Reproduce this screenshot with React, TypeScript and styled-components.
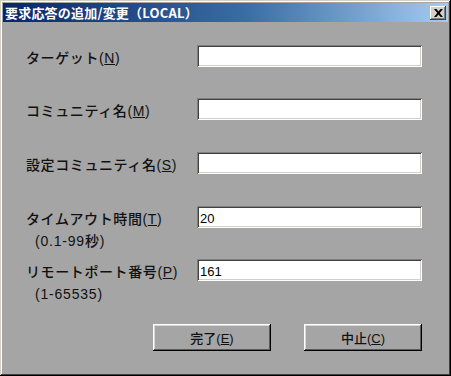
import * as React from 'react';
import { FunctionComponent } from 'react';
import styled, { createGlobalStyle } from 'styled-components';

const GlobalStyle = createGlobalStyle`
    html, body {
        margin: 0;
        padding: 0;
        background: #a5a5a5;
    }
`;

interface IField {
    label: string;
    mnemonic: string;
    hint?: string;
    value: string;
}

const fields: IField[] = [
    { label: 'ターゲット', mnemonic: 'N', value: '' },
    { label: 'コミュニティ名', mnemonic: 'M', value: '' },
    { label: '設定コミュニティ名', mnemonic: 'S', value: '' },
    { label: 'タイムアウト時間', mnemonic: 'T', hint: '(0.1-99秒)', value: '20' },
    { label: 'リモートポート番号', mnemonic: 'P', hint: '(1-65535)', value: '161' }
];

const Mnemonic: FunctionComponent<{ text: string; letter: string }> = props => (
    <>
        { props.text }(<u>{ props.letter }</u>)
    </>
);

const CloseGlyph = () => (
    <svg width="9" height="8" viewBox="0 0 9 8">
        <path d="M0 0h2.4l2.1 2.5L6.6 0H9L5.7 4 9 8H6.6L4.5 5.5 2.4 8H0l3.3-4z" fill="#000"/>
    </svg>
);

const App: FunctionComponent = () => (
    <>
        <GlobalStyle/>
        <Window>
            <TitleBar>
                <Title>要求応答の追加/変更（LOCAL）</Title>
                <CloseButton><CloseGlyph/></CloseButton>
            </TitleBar>
            <Body>
                <Form>
                    { fields.map(f => (
                        <Row key={ f.mnemonic }>
                            <LabelCol>
                                <Label><Mnemonic text={ f.label } letter={ f.mnemonic }/></Label>
                                { f.hint && <Hint>{ f.hint }</Hint> }
                            </LabelCol>
                            <TextField defaultValue={ f.value }/>
                        </Row>
                    )) }
                </Form>
                <Footer>
                    <Button><Mnemonic text="完了" letter="E"/></Button>
                    <Button><Mnemonic text="中止" letter="C"/></Button>
                </Footer>
            </Body>
        </Window>
    </>
);

const Window = styled.div`
    width: 451px;
    height: 376px;
    box-sizing: border-box;
    padding: 3px;
    display: flex;
    flex-direction: column;
    background: #a5a5a5;
    box-shadow: inset -1px -1px #000, inset 1px 1px #d4d0c8, inset -2px -2px #404040, inset 2px 2px #fff;
    font-family: "Liberation Sans", "Noto Sans CJK JP", sans-serif;
    color: #000;
`;

const TitleBar = styled.div`
    height: 19px;
    display: flex;
    align-items: center;
    justify-content: space-between;
    padding: 0 2px 0 2px;
    background: linear-gradient(to right, #0a246a 0%, #3a6ea5 55%, #a6caf0 100%);
`;

const Title = styled.span`
    color: #fff;
    font-family: "Noto Sans CJK JP", sans-serif;
    font-weight: bold;
    font-size: 13px;
    letter-spacing: 0.2px;
    line-height: 19px;
    white-space: nowrap;
`;

const CloseButton = styled.div`
    width: 16px;
    height: 14px;
    box-sizing: border-box;
    display: flex;
    align-items: center;
    justify-content: center;
    background: #d4d0c8;
    box-shadow: inset -1px -1px #404040, inset 1px 1px #fff, inset -2px -2px #808080;
`;

const Body = styled.div`
    flex: 1;
    display: flex;
    flex-direction: column;
    padding: 23px 26px 0 23px;
`;

const Form = styled.div`
    display: grid;
    grid-template-rows: 53px 54px 54px 53px auto;
`;

const Row = styled.div`
    display: flex;
    align-items: flex-start;
`;

const LabelCol = styled.div`
    width: 171px;
    display: flex;
    flex-direction: column;
`;

const Label = styled.div`
    margin-top: 2px;
    font-size: 14px;
    font-weight: 500;
    line-height: 22px;
    letter-spacing: 0.6px;
    white-space: nowrap;
    color: #111;
`;

const Hint = styled.div`
    padding-left: 9px;
    font-size: 14px;
    font-weight: 500;
    line-height: 22px;
    letter-spacing: 0.8px;
    white-space: nowrap;
    color: #111;
`;

const TextField = styled.input`
    width: 225px;
    height: 22px;
    box-sizing: border-box;
    border: none;
    outline: none;
    margin: 0;
    padding: 2px 3px 0;
    background: #fff;
    font-family: "Liberation Sans", Arial, sans-serif;
    font-size: 13px;
    color: #000;
    box-shadow: inset 1px 1px #808080, inset -1px -1px #fff, inset 2px 2px #404040, inset -2px -2px #d4d0c8;
`;

const Footer = styled.div`
    display: flex;
    justify-content: flex-end;
    gap: 33px;
    margin-top: 19px;
`;

const Button = styled.button`
    width: 118px;
    height: 27px;
    margin: 0;
    padding: 0;
    border: none;
    background: #a5a5a5;
    font-family: "Liberation Sans", "Noto Sans CJK JP", sans-serif;
    font-size: 13px;
    font-weight: 500;
    color: #111;
    box-shadow: inset -1px -1px #000, inset 1px 1px #fff, inset -2px -2px #5a5a5a, inset 2px 2px #d8d8d8;
`;

export default App;
